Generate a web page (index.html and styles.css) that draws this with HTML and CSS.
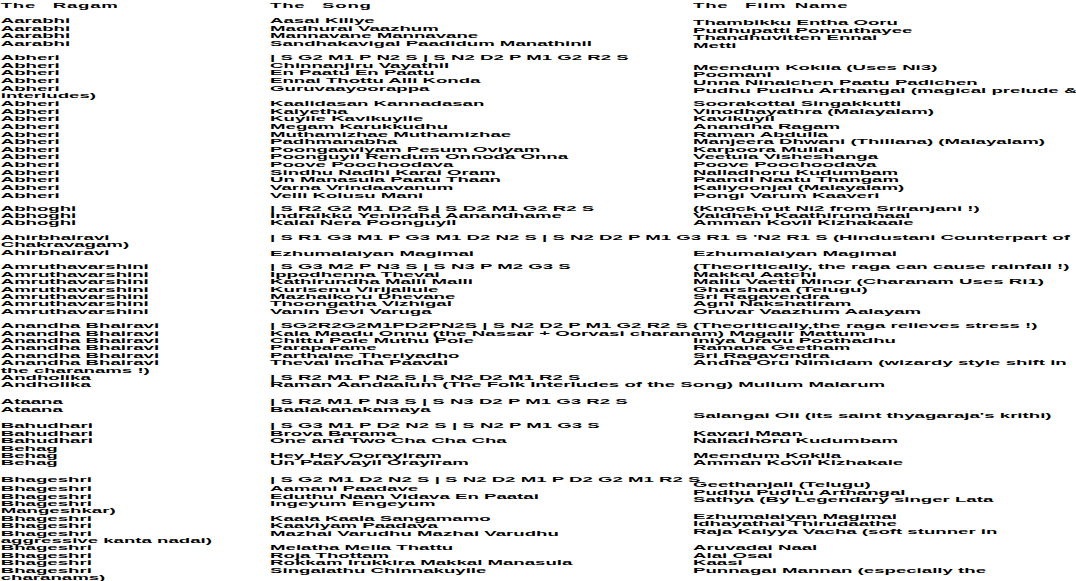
FILE: index.html
```html
<!DOCTYPE html>
<html>
<head>
<meta charset="utf-8">
<link rel="stylesheet" href="styles.css">
</head>
<body>
<div class="sheet">
  <div class="row head"><span>The  Ragam</span><span>The  Song</span><span>The  Film Name</span></div>

  <div class="grp g-a">
    <div class="row"><span>Aarabhi</span><span>Aasai Kiliye</span><span class="lo">Thambikku Entha Ooru</span></div>
    <div class="row"><span>Aarabhi</span><span>Madhurai Vaazhum</span><span class="lo">Pudhupatti Ponnuthayee</span></div>
    <div class="row"><span>Aarabhi</span><span>Mannavane Mannavane</span><span class="lo">Thandhuvitten Ennai</span></div>
    <div class="row"><span>Aarabhi</span><span>Sandhakavigal Paadidum Manathinil</span><span class="lo">Metti</span></div>
  </div>

  <div class="grp g-b">
    <div class="row"><span>Abheri</span><span>| S G2 M1 P N2 S | S N2 D2 P M1 G2 R2 S</span><span></span></div>
    <div class="row"><span>Abheri</span><span>Chinnanjiru Vayathil</span><span class="lo">Meendum Kokila (Uses Ni3)</span></div>
    <div class="row"><span>Abheri</span><span>En Paatu En Paatu</span><span class="lo">Poomani</span></div>
    <div class="row"><span>Abheri</span><span>Ennai Thottu Alli Konda</span><span class="lo">Unna Ninaichen Paatu Padichen</span></div>
    <div class="row"><span>Abheri</span><span>Guruvaayoorappa</span><span class="lo">Pudhu Pudhu Arthangal (magical prelude &amp;</span></div>
    <div class="row"><span>interludes)</span><span></span><span></span></div>
    <div class="row"><span>Abheri</span><span>Kaalidasan Kannadasan</span><span>Soorakottai Singakkutti</span></div>
    <div class="row"><span>Abheri</span><span>Kaiyetha</span><span>Vinodhayathra (Malayalam)</span></div>
    <div class="row"><span>Abheri</span><span>Kuyile Kavikuyile</span><span>Kavikuyil</span></div>
    <div class="row"><span>Abheri</span><span>Megam Karukkudhu</span><span>Anandha Ragam</span></div>
    <div class="row"><span>Abheri</span><span>Muthamizhae Muthamizhae</span><span>Raman Abdulla</span></div>
    <div class="row"><span>Abheri</span><span>Padhmanabha</span><span>Manjeera Dhwani (Thillana) (Malayalam)</span></div>
    <div class="row"><span>Abheri</span><span>Poongaaviyam Pesum Oviyam</span><span>Karpoora Mullai</span></div>
    <div class="row"><span>Abheri</span><span>Poonguyil Rendum Onnoda Onna</span><span>Veetula Visheshanga</span></div>
    <div class="row"><span>Abheri</span><span>Poove Poochoodava</span><span>Poove Poochoodava</span></div>
    <div class="row"><span>Abheri</span><span>Sindhu Nadhi Karai Oram</span><span>Nalladhoru Kudumbam</span></div>
    <div class="row"><span>Abheri</span><span>Un Manasula Paatu Thaan</span><span>Paandi Naatu Thangam</span></div>
    <div class="row"><span>Abheri</span><span>Varna Vrindaavanum</span><span>Kaliyoonjal (Malayalam)</span></div>
    <div class="row"><span>Abheri</span><span>Velli Kolusu Mani</span><span>Pongi Varum Kaaveri</span></div>
  </div>

  <div class="grp g-c">
    <div class="row"><span>Abhoghi</span><span>| S R2 G2 M1 D2 S | S D2 M1 G2 R2 S</span><span>(Knock out Ni2 from Sriranjani !)</span></div>
    <div class="row"><span>Abhoghi</span><span>Indraikku Yenindha Aanandhame</span><span>Vaidhehi Kaathirundhaal</span></div>
    <div class="row"><span>Abhoghi</span><span>Kalai Nera Poonguyil</span><span>Amman Kovil Kizhakaale</span></div>
  </div>

  <div class="grp g-d">
    <div class="row"><span>Ahirbhairavi</span><span class="wide">| S R1 G3 M1 P G3 M1 D2 N2 S | S N2 D2 P M1 G3 R1 S 'N2 R1 S (Hindustani Counterpart of</span></div>
    <div class="row"><span>Chakravagam)</span><span></span><span></span></div>
    <div class="row"><span>Ahirbhairavi</span><span class="nudge">Ezhumalaiyan Magimai</span><span class="nudge">Ezhumalaiyan Magimai</span></div>
  </div>

  <div class="grp g-e">
    <div class="row"><span>Amruthavarshini</span><span>| S G3 M2 P N3 S | S N3 P M2 G3 S</span><span>(Theoritically, the raga can cause rainfall !)</span></div>
    <div class="row"><span>Amruthavarshini</span><span>Ippodhenna Thevai</span><span>Makkal Aatchi</span></div>
    <div class="row"><span>Amruthavarshini</span><span>Kathirundha Malli Malli</span><span>Mallu Vaetti Minor (Charanam Uses Ri1)</span></div>
    <div class="row"><span>Amruthavarshini</span><span>Kurisenu Virijallule</span><span>Gharshana (Telugu)</span></div>
    <div class="row"><span>Amruthavarshini</span><span>Mazhaikoru Dhevane</span><span>Sri Ragavendra</span></div>
    <div class="row"><span>Amruthavarshini</span><span>Thoongatha Vizhigal</span><span>Agni Nakshatiram</span></div>
    <div class="row"><span>Amruthavarshini</span><span>Vanin Devi Varuga</span><span>Oruvar Vaazhum Aalayam</span></div>
  </div>

  <div class="grp g-f">
    <div class="row"><span>Anandha Bhairavi</span><span>| SG2R2G2M1PD2PN2S | S N2 D2 P M1 G2 R2 S</span><span>(Theoritically,the raga relieves stress !)</span></div>
    <div class="row"><span>Anandha Bhairavi</span><span class="wide">Kala Maadu Onnu (the Nassar + Oorvasi charanam) Magalir Mattum</span></div>
    <div class="row"><span>Anandha Bhairavi</span><span>Chittu Pole Muthu Pole</span><span>Iniya Uravu Poothadhu</span></div>
    <div class="row"><span>Anandha Bhairavi</span><span>Paraparame</span><span>Ramana Geetham</span></div>
    <div class="row"><span>Anandha Bhairavi</span><span>Parthalae Theriyadho</span><span>Sri Ragavendra</span></div>
    <div class="row"><span>Anandha Bhairavi</span><span>Thevai Indha Paavai</span><span>Andha Oru Nimidam (wizardy style shift in</span></div>
    <div class="row"><span>the charanams !)</span><span></span><span></span></div>
    <div class="row"><span>Andholika</span><span>| S R2 M1 P N2 S | S N2 D2 M1 R2 S</span><span></span></div>
    <div class="row"><span>Andholika</span><span class="wide">Raman Aandaalum (The Folk Interludes of the Song) Mullum Malarum</span></div>
  </div>

  <div class="grp g-g">
    <div class="row"><span>Ataana</span><span>| S R2 M1 P N3 S | S N3 D2 P M1 G3 R2 S</span><span></span></div>
    <div class="row"><span>Ataana</span><span>Baalakanakamaya</span><span class="drop">Salangai Oli (its saint thyagaraja's krithi)</span></div>
  </div>

  <div class="grp g-h">
    <div class="row"><span>Bahudhari</span><span>| S G3 M1 P D2 N2 S | S N2 P M1 G3 S</span><span></span></div>
    <div class="row"><span>Bahudhari</span><span>Brova Barama</span><span>Kavari Maan</span></div>
    <div class="row"><span>Bahudhari</span><span>One and Two Cha Cha Cha</span><span>Nalladhoru Kudumbam</span></div>
    <div class="row"><span>Behag</span><span></span><span></span></div>
    <div class="row"><span>Behag</span><span>Hey Hey Oorayiram</span><span>Meendum Kokila</span></div>
    <div class="row"><span>Behag</span><span>Un Paarvayil Orayiram</span><span>Amman Kovil Kizhakale</span></div>
  </div>

  <div class="grp g-i">
    <div class="row"><span>Bhageshri</span><span>| S G2 M1 D2 N2 S | S N2 D2 M1 P D2 G2 M1 R2 S</span><span></span></div>
  </div>

  <div class="grp g-j">
    <div class="row"><span>Bhageshri</span><span>Aamani Paadave</span><span class="up">Geethanjali (Telugu)</span></div>
    <div class="row"><span>Bhageshri</span><span>Eduthu Naan Vidava En Paatai</span><span class="up">Pudhu Pudhu Arthangal</span></div>
    <div class="row"><span>Bhageshri</span><span>Ingeyum Engeyum</span><span class="up">Sathya (By Legendary singer Lata</span></div>
    <div class="row"><span>Mangeshkar)</span><span></span><span></span></div>
    <div class="row"><span>Bhageshri</span><span>Kaala Kaala Sangamamo</span><span class="up-s">Ezhumalaiyan Magimai</span></div>
    <div class="row"><span>Bhageshri</span><span>Kaaviyam Paadava</span><span class="up-s">Idhayathai Thirudaathe</span></div>
    <div class="row"><span>Bhageshri</span><span>Mazhai Varudhu Mazhai Varudhu</span><span class="up-s">Raja Kaiyya Vacha (soft stunner in</span></div>
    <div class="row"><span>aggressive kanta nadai)</span><span></span><span></span></div>
    <div class="row"><span>Bhageshri</span><span>Melatha Mella Thattu</span><span>Aruvadai Naal</span></div>
    <div class="row"><span>Bhageshri</span><span>Roja Thottam</span><span>Alai Osai</span></div>
    <div class="row"><span>Bhageshri</span><span>Rokkam Irukkira Makkal Manasula</span><span>Kaasi</span></div>
    <div class="row"><span>Bhageshri</span><span>Singalathu Chinnakuyile</span><span>Punnagai Mannan (especially the</span></div>
    <div class="row"><span>charanams)</span><span></span><span></span></div>
  </div>
</div>
</body>
</html>
```

FILE: styles.css
```css
html {
  overflow: hidden;
  background: #ffffff;
}

body {
  margin: 0;
  background: #ffffff;
  color: #000000;
  font-family: "Liberation Sans", Arial, sans-serif;
  font-weight: bold;
  font-size: 7.6px;
}

/* The printout is set in a horizontally extended face:
   the whole sheet is stretched along x only. */
.sheet {
  box-sizing: border-box;
  width: 438.6px;
  padding: 1.8px 0 0 0.3px;
  transform: scaleX(2.453);
  transform-origin: 0 0;
}

.row {
  display: grid;
  grid-template-columns: 109.8px 172.44px minmax(0, 1fr);
  height: 7.4px;
  line-height: 7.4px;
  white-space: pre;
}

.g-a > .row {
  height: 7.8px;
  line-height: 7.8px;
}

.g-b > .row {
  height: 7.65px;
  line-height: 7.65px;
}

.row > span {
  display: block;
  min-width: 0;
}

.row > .wide {
  grid-column: 2 / 4;
}

.head > span {
  letter-spacing: 0.3px;
  word-spacing: 1px;
}

.lo {
  padding-top: 2px;
}

.nudge {
  padding-top: 1.3px;
}

.drop {
  padding-top: 6px;
}

.up {
  margin-top: -4px;
}

.up-s {
  margin-top: -2px;
}

.g-a { margin-top: 7.7px; }
.g-b { margin-top: 6.1px; }
.g-c { margin-top: 5.3px; }
.g-d { margin-top: 7.2px; }
.g-e { margin-top: 7.2px; }
.g-f { margin-top: 7.2px; }
.g-g { margin-top: 9.4px; }
.g-h { margin-top: 9.4px; }
.g-i { margin-top: 9.4px; }
.g-j { margin-top: 1.8px; }
```
